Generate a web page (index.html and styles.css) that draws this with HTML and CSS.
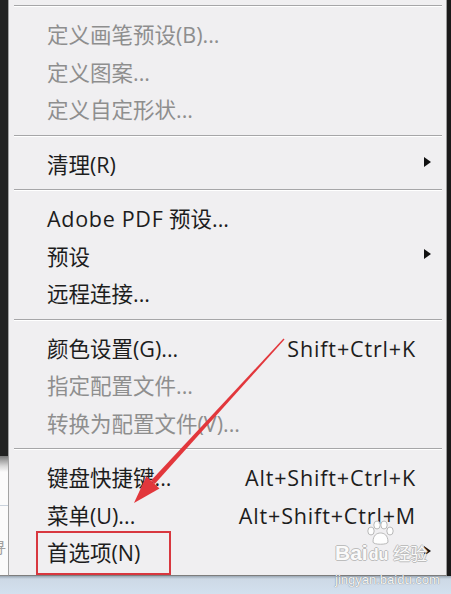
FILE: index.html
```html
<!DOCTYPE html>
<html lang="zh-CN">
<head>
<meta charset="utf-8">
<title>Menu</title>
<link rel="stylesheet" href="styles.css">
</head>
<body>
<div class="page">
  <div class="screen">
    <div class="left-strip">
      <div class="left-dark"></div>
      <div class="left-window"><span class="left-char">寻</span></div>
    </div>
    <div class="menu">
      <div class="sep"></div>
      <div class="item disabled"><span class="label">定义画笔预设(B)...</span><span class="key"></span><span class="sub"></span></div>
      <div class="item disabled"><span class="label">定义图案...</span><span class="key"></span><span class="sub"></span></div>
      <div class="item disabled"><span class="label">定义自定形状...</span><span class="key"></span><span class="sub"></span></div>
      <div class="sep"></div>
      <div class="item"><span class="label">清理(R)</span><span class="key"></span><span class="sub"><i class="tri"></i></span></div>
      <div class="sep"></div>
      <div class="item"><span class="label"><span class="latin">Adobe PDF</span> 预设...</span><span class="key"></span><span class="sub"></span></div>
      <div class="item"><span class="label">预设</span><span class="key"></span><span class="sub"><i class="tri"></i></span></div>
      <div class="item"><span class="label">远程连接...</span><span class="key"></span><span class="sub"></span></div>
      <div class="sep"></div>
      <div class="item"><span class="label">颜色设置(G)...</span><span class="key">Shift+Ctrl+K</span><span class="sub"></span></div>
      <div class="item disabled"><span class="label">指定配置文件...</span><span class="key"></span><span class="sub"></span></div>
      <div class="item disabled"><span class="label">转换为配置文件(V)...</span><span class="key"></span><span class="sub"></span></div>
      <div class="sep"></div>
      <div class="item"><span class="label">键盘快捷键...</span><span class="key">Alt+Shift+Ctrl+K</span><span class="sub"></span></div>
      <div class="item"><span class="label">菜单(U)...</span><span class="key">Alt+Shift+Ctrl+M</span><span class="sub"></span></div>
      <div class="item"><span class="label">首选项(N)</span><span class="key"></span><span class="sub"><i class="tri"></i></span></div>

      <div class="highlight-box"></div>
      <div class="watermark">
        <svg class="wm-paw-icon" width="30" height="26" viewBox="0 0 30 26">
          <g fill="rgba(255,255,255,0.9)" stroke="#b9b9b9" stroke-width="1">
            <ellipse cx="6" cy="11" rx="3.2" ry="4"/>
            <ellipse cx="12" cy="5" rx="3.2" ry="4"/>
            <ellipse cx="19" cy="5" rx="3.2" ry="4"/>
            <ellipse cx="25" cy="11" rx="3.2" ry="4"/>
            <path d="M8 22 C8 15 12 13 15.5 13 C19 13 23 15 23 22 C23 25 8 25 8 22 Z"/>
          </g>
        </svg>
        <span class="wm-logo">Bai<span class="wm-du">du</span><span class="wm-jy">经验</span></span>
        <span class="wm-url">jingyan.baidu.com</span>
      </div>
      <svg class="annot-arrow" width="451" height="594" viewBox="0 0 451 594">
        <polygon points="284.5,339.5 283.5,338.5 151.1,480.6 154.7,484.0" fill="#e2373c"/>
        <polygon points="134,503 146.3,476.2 159.5,488.4" fill="#e2373c"/>
      </svg>
    </div>
    <div class="right-strip"></div>
  </div>
  <div class="taskbar"></div>
</div>
</body>
</html>
```
FILE: styles.css
```css
html, body {
  margin: 0;
  padding: 0;
}
body {
  width: 451px;
  height: 594px;
  overflow: hidden;
  background: #1f1f1f;
  font-family: "Open Sans", "Noto Sans CJK SC", sans-serif;
}
.page {
  display: flex;
  flex-direction: column;
  height: 594px;
}
.screen {
  display: grid;
  grid-template-columns: 8px 439px 4px;
  height: 576px;
}
.left-strip {
  display: flex;
  flex-direction: column;
}
.left-dark {
  height: 456px;
  background: #222222;
}
.left-window {
  flex: 1;
  background: linear-gradient(#7a7a7a 0px, #d8d8d8 10px, #fbfbfb 16px);
  border-bottom: 1px solid #8a8a8a;
  position: relative;
  overflow: hidden;
}
.left-window::before {
  content: "";
  display: block;
  margin-top: 49px;
  border-top: 1px solid #c9d2dc;
}
.left-char {
  position: absolute;
  left: -9px;
  top: 80px;
  font-size: 15px;
  color: #a0a0a0;
}
.menu {
  position: relative;
  background: #f0eff1;
  border-left: 1px solid #a3a3a3;
  border-right: 1px solid #9c9c9c;
  border-bottom: 1px solid #7d7d7d;
  padding: 1px 0 1px 0;
  box-sizing: border-box;
  height: 576px;
}
.sep {
  margin: 4px 4px 11px 5px;
  height: 0;
  border-top: 1px solid #a6a6a8;
  border-bottom: 1px solid #ffffff;
}
.item {
  display: grid;
  grid-template-columns: 1fr auto 31px;
  align-items: center;
  box-sizing: border-box;
  height: 37.5px;
  line-height: 33.5px;
  padding: 0 0 4px 38px;
  font-size: 21.5px;
  color: #1d1d1d;
  white-space: nowrap;
}
.item.disabled {
  color: #8e8e8e;
}
.latin {
  letter-spacing: 0.7px;
}
.key {
  text-align: right;
  letter-spacing: 0.85px;
  margin-right: -1px;
}
.sub {
  display: flex;
  align-items: center;
  height: 33.5px;
}
.tri {
  display: block;
  width: 0;
  height: 0;
  margin-left: 9px;
  margin-top: -4px;
  border-top: 5.5px solid transparent;
  border-bottom: 5.5px solid transparent;
  border-left: 7px solid #111111;
}
.highlight-box {
  position: absolute;
  left: 27px;
  top: 531px;
  width: 131px;
  height: 40px;
  border: 2px solid #d8373f;
}
.watermark {
  position: absolute;
  left: 326px;
  top: 520px;
  width: 100px;
  color: #ffffff;
  pointer-events: none;
}
.wm-paw-icon {
  position: absolute;
  left: 30px;
  top: 0;
}
.wm-logo {
  display: block;
  margin-top: 20px;
  font-family: "Liberation Sans", sans-serif;
  font-weight: bold;
  font-size: 21px;
  line-height: 26px;
  color: rgba(255, 255, 255, 0.95);
  text-shadow: 1px 0 0 #bdbdbd, -1px 0 0 #bdbdbd, 0 1px 0 #bdbdbd, 0 -1px 0 #bdbdbd;
}
.wm-du {
  position: relative;
  font-size: 16px;
  margin-left: 1px;
}
.wm-jy {
  font-family: "Noto Sans CJK SC", sans-serif;
  font-weight: normal;
  font-size: 17px;
  margin-left: 5px;
}
.wm-url {
  display: block;
  font-family: "Liberation Sans", sans-serif;
  font-size: 13px;
  line-height: 14px;
  margin-top: 5px;
  color: rgba(255, 255, 255, 0.95);
  text-shadow: 0 0 1px #555555;
}
.annot-arrow {
  position: absolute;
  left: -9px;
  top: 0;
  pointer-events: none;
}
.right-strip {
  background: #1a1a1a;
}
.taskbar {
  flex: 1;
  background: linear-gradient(#9aa7b4 0px, #cdd9e6 3px, #d3e0ee 100%);
}
```
